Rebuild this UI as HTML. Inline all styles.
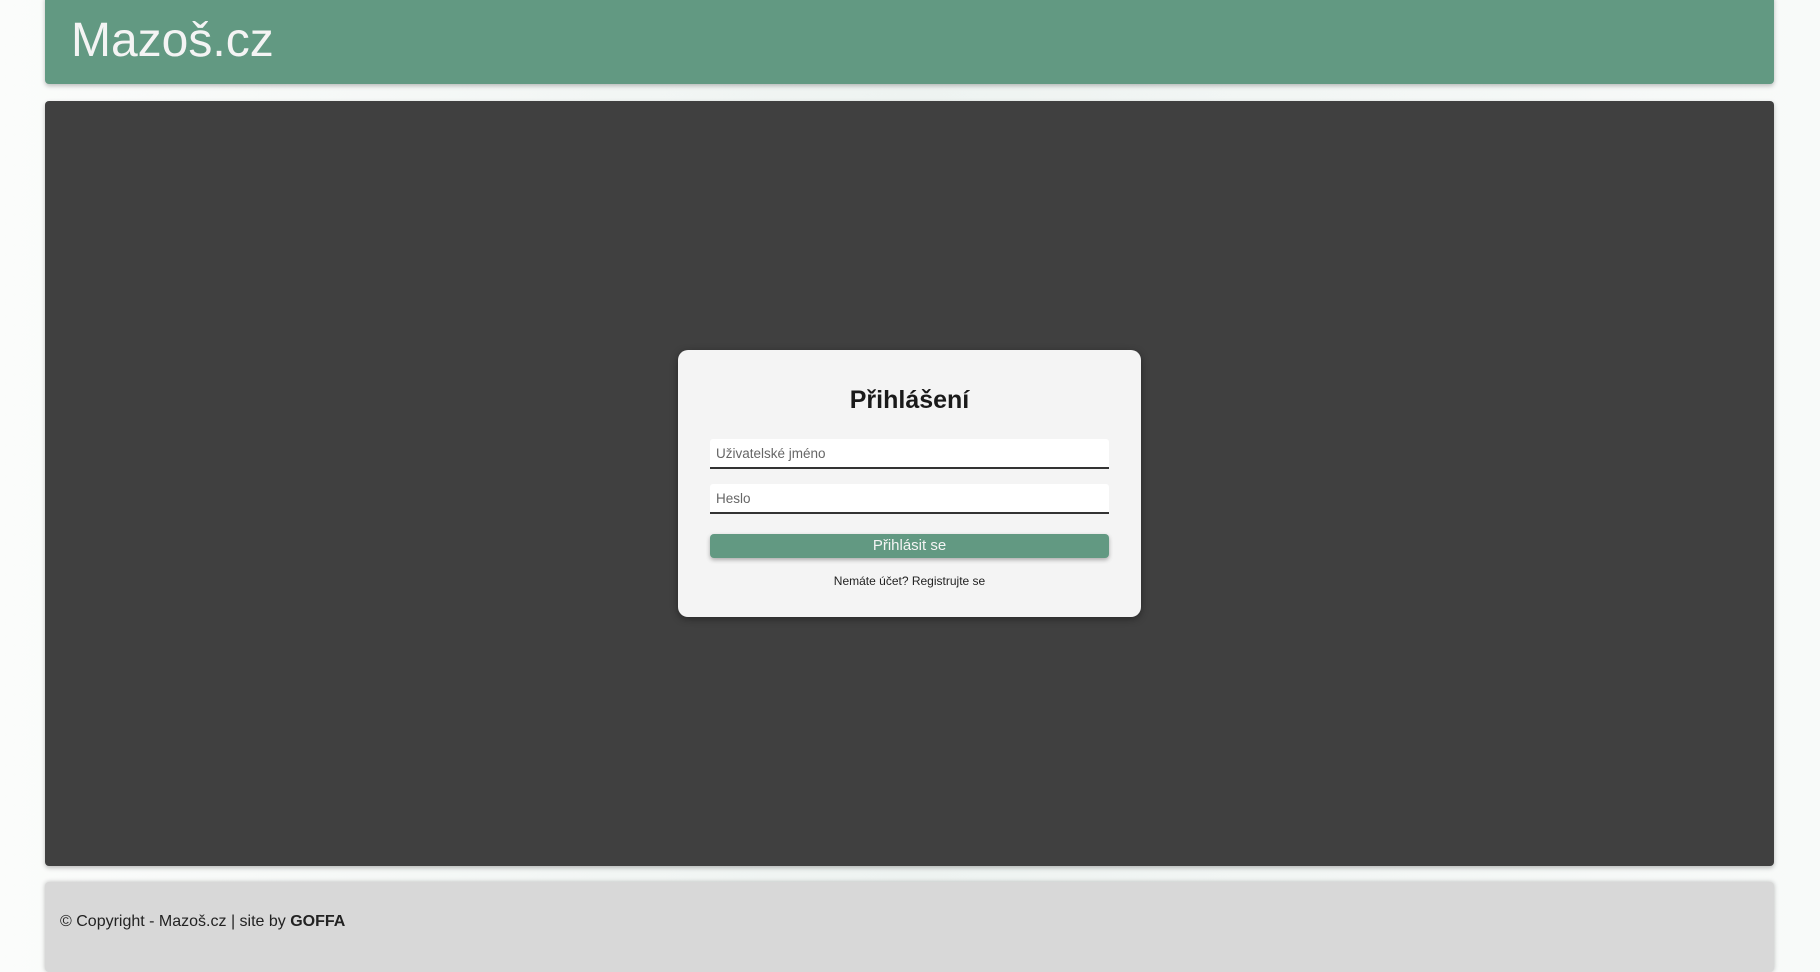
<!DOCTYPE html>
<html><head><meta charset="utf-8"><style>
*{box-sizing:border-box;margin:0;padding:0}
body{width:1820px;height:960px;overflow:hidden;background:linear-gradient(90deg,#fbfcfb,#eef3f1 50%,#f8faf9);font-family:"Liberation Sans",Arial,sans-serif;position:relative}
.hdr{position:absolute;left:45px;top:-5px;width:1729px;height:89px;background:#629982;border-radius:4px;box-shadow:0 2px 5px rgba(0,0,0,.25)}
.hdr h1{position:absolute;left:26px;top:18px;font-weight:normal;font-size:48px;color:#f4f4f4}
.main{position:absolute;left:45px;top:101px;width:1729px;height:765px;background:#404040;border-radius:4px;box-shadow:0 2px 5px rgba(0,0,0,.25)}
.card{position:absolute;left:678px;top:350px;width:463px;height:267px;background:#f4f4f4;border-radius:10px;box-shadow:0 2px 8px rgba(0,0,0,.4)}
.card h2{position:absolute;left:0;right:0;top:36px;text-align:center;font-size:25px;color:#1a1a1a}
.in{position:absolute;left:32px;width:399px;height:30px;background:#fff;border-radius:3px 3px 0 0;border-bottom:2px solid #333;font-size:13.5px;color:#666;padding:7px 6px}
.btn{position:absolute;left:32px;top:184px;width:399px;height:24px;background:#629982;border-radius:4px;color:#f4f4f4;text-align:center;font-size:15px;line-height:24px;box-shadow:0 2px 4px rgba(0,0,0,.3)}
.lnk{position:absolute;left:0;right:0;top:224px;text-align:center;font-size:12px;color:#222}
.ftr{position:absolute;left:45px;top:882px;width:1729px;height:90px;background:#d8d8d8;border-radius:4px;box-shadow:0 0 5px rgba(0,0,0,.25)}
.ftr p{position:absolute;left:15px;top:31px;font-size:16px;color:#222}
</style></head><body>
<div class="hdr"><h1>Mazoš.cz</h1></div>
<div class="main">
</div>
<div class="card">
<h2>Přihlášení</h2>
<div class="in" style="top:89px">Uživatelské jméno</div>
<div class="in" style="top:134px">Heslo</div>
<div class="btn">Přihlásit se</div>
<div class="lnk">Nemáte účet? Registrujte se</div>
</div>
<div class="ftr"><p>© Copyright - Mazoš.cz | site by <b>GOFFA</b></p></div>
</body></html>
